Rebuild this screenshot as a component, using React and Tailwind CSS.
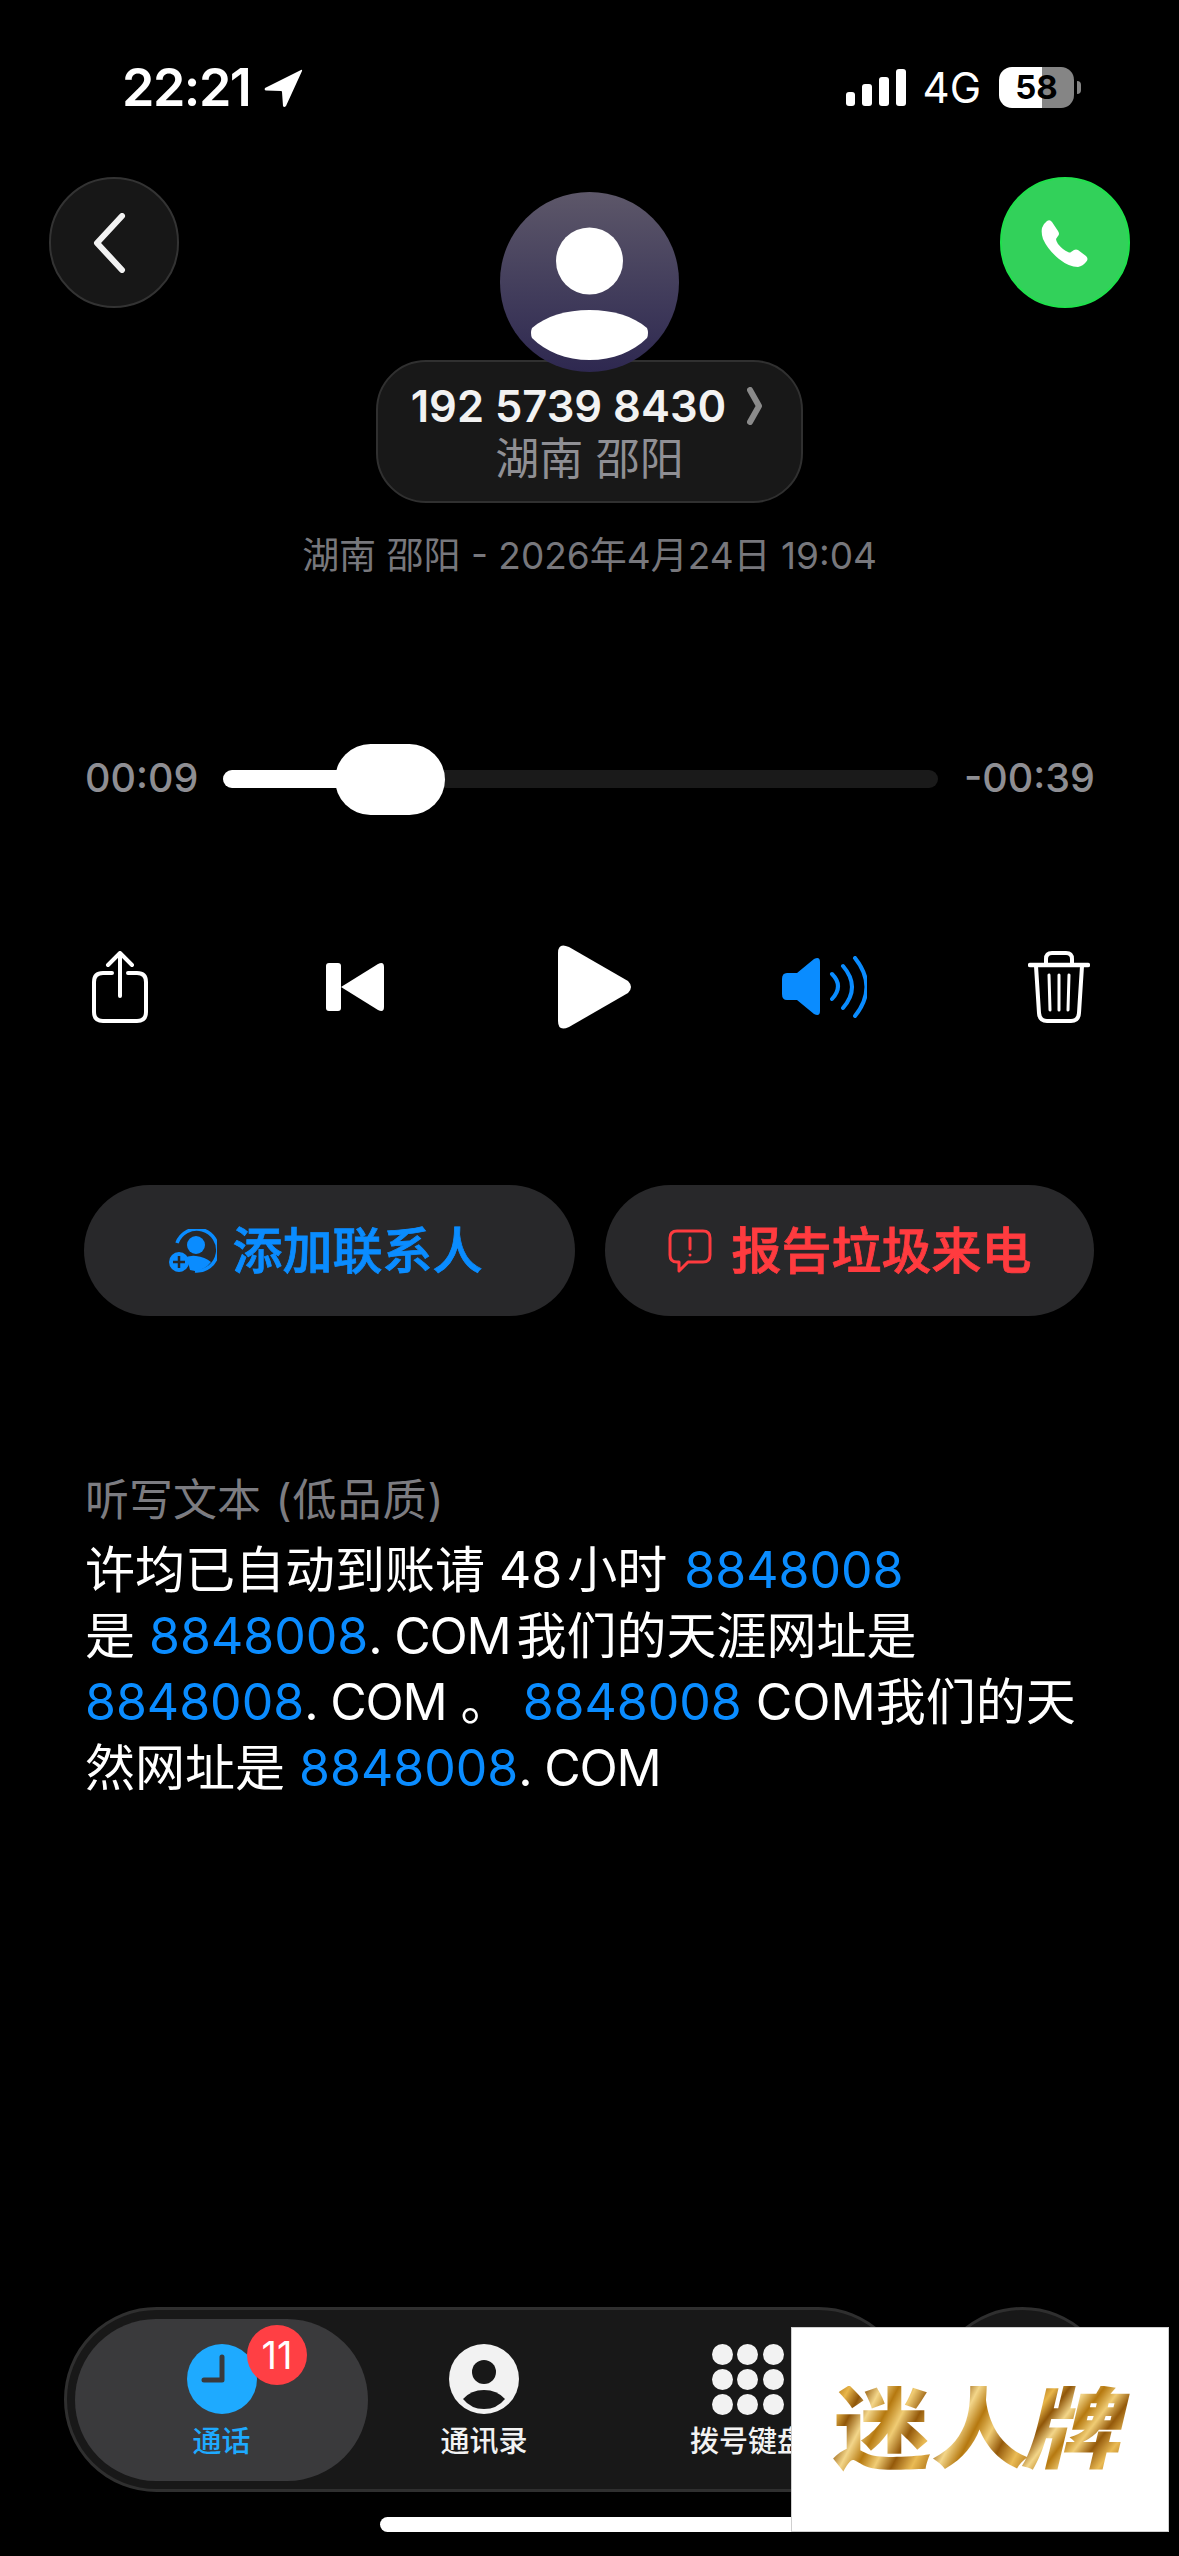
const BLUE = '#0a8cff';

function StatusBar() {
  return (
    <div className="flex h-[41px] mt-[67px] items-center justify-between pl-[122px] pr-[98px]">
      <div className="flex items-center gap-[14px]">
        <span className="text-[52px] leading-[41px] font-semibold text-white tracking-[-1.500px]">22:21</span>
        <svg width="40" height="40" viewBox="0 0 40 40">
          <path d="M37 2 L1 20 Q0 22 2 22.5 L17 23 Q18 23 18 24 L19 38 Q20 40 22 38 L38 3 Q38.5 1 37 2 Z" fill="#fff" />
        </svg>
      </div>
      <div className="flex items-center">
        <div className="flex items-end gap-[7px] h-[37px]">
          <div className="w-[9px] h-[14px] rounded-[3px] bg-white" />
          <div className="w-[10px] h-[22px] rounded-[3px] bg-white" />
          <div className="w-[10px] h-[29px] rounded-[3px] bg-white" />
          <div className="w-[10px] h-[37px] rounded-[3px] bg-white" />
        </div>
        <span className="ml-[17px] text-[42px] leading-[41px] text-white font-normal">4G</span>
        <div className="relative ml-[18px] w-[75px] h-[41px] rounded-[13px] bg-[linear-gradient(90deg,#fff_0,#fff_57%,#858585_57%,#858585_100%)] flex items-center justify-center">
          <span className="text-[33px] leading-none font-bold text-black">58</span>
        </div>
        <div className="ml-[3px] w-[4px] h-[13px] rounded-r-full bg-[#858585]" />
      </div>
    </div>
  );
}

function Avatar() {
  return (
    <div className="relative z-10 w-[179px] h-[180px] rounded-full bg-linear-to-b from-[#5d5769] to-[#2e2850]">
      <svg width="179" height="180" viewBox="0 0 179 180">
        <circle cx="89.5" cy="69" r="33.5" fill="#fff" />
        <path d="M32 136 Q30 141 32 146 C46 160 66 168 89.5 168 C113 168 133 160 147 146 Q149 141 147 136 C133 124 113 118 89.5 118 C66 118 46 124 32 136 Z" fill="#fff" />
      </svg>
    </div>
  );
}

function Header() {
  return (
    <div className="flex items-start justify-between mt-[69px] px-[49px]">
      <div className="w-[130px] h-[131px] rounded-full bg-[#171717] border-2 border-[#333] flex items-center justify-center">
        <svg className="mr-[6px]" width="40" height="60" viewBox="0 0 40 60" fill="none">
          <path d="M31 3 L6 30 L31 57" stroke="#f2f2f2" strokeWidth="6" strokeLinecap="round" strokeLinejoin="round" />
        </svg>
      </div>
      <div className="flex flex-col items-center pt-[15px]">
        <Avatar />
        <div className="-mt-[12px] w-[427px] h-[143px] rounded-[50px] bg-[#181818] border-2 border-[#303030] flex flex-col items-center pt-[21px]">
          <div className="flex items-center h-[46px] pr-[5px]">
            <span className="text-[43.500px] leading-[46px] font-semibold text-[#f2f2f2]">192 5739 8430</span>
            <svg className="ml-[21px]" width="16" height="38" viewBox="0 0 16 38" fill="none">
              <path d="M3 3 L12 19 L3 35" stroke="#8a8a8a" strokeWidth="6" strokeLinecap="round" strokeLinejoin="round" />
            </svg>
          </div>
          <span className="mt-[5px] text-[44px] leading-[50px] text-[#8f8f94]">湖南 邵阳</span>
        </div>
        <span className="mt-[33px] h-[40px] text-[37px] leading-[40px] text-[#77777c] whitespace-nowrap">湖南 邵阳 - 2026年4月24日 19:04</span>
      </div>
      <div className="w-[130px] h-[131px] rounded-full bg-[#32d15a] border-2 border-[#1fe04c] flex items-center justify-center">
        <svg width="48" height="48" viewBox="0 0 48 48" fill="#fff">
          <path d="M6 2 Q9 0 11 3 L17 12 Q19 15 17 17 L15 20 Q15 22 17 25 Q22 31 27 33 Q29 34 30 33 L33 31 Q35 30 37 31 L45 37 Q48 40 45 43 Q42 47 37 48 Q28 48 18 40 Q7 31 2 20 Q0 14 1 9 Q2 5 6 2 Z" />
        </svg>
      </div>
    </div>
  );
}

function Slider() {
  return (
    <div className="flex items-center h-[71px] mt-[167px] pl-[85px]">
      <span className="w-[138px] text-[39.500px] leading-none font-medium text-[#8e8e93]">00:09</span>
      <div className="relative w-[715px] h-[18px] rounded-full bg-[#1a1a1a]">
        <div className="w-[150px] h-[18px] rounded-full bg-white" />
        <div className="absolute left-[112px] -top-[26px] w-[110px] h-[71px] rounded-[36px] bg-white" />
      </div>
      <span className="ml-[26px] text-[39.500px] leading-none font-medium text-[#8e8e93]">-00:39</span>
    </div>
  );
}

function Controls() {
  return (
    <div className="flex items-center h-[84px] mt-[131px] pl-[92px]">
      <svg width="56" height="72" viewBox="0 0 56 72" fill="none" stroke="#fff" strokeWidth="4" strokeLinecap="round" strokeLinejoin="round">
        <path d="M20 22 H11 Q2 22 2 31 V61 Q2 70 11 70 H45 Q54 70 54 61 V31 Q54 22 45 22 H36" />
        <path d="M28 45 V3 M16 14 L28 2 L40 14" />
      </svg>
      <svg className="ml-[178px]" width="58" height="50" viewBox="0 0 58 50" fill="#fff">
        <rect x="0" y="1" width="15" height="48" rx="3" />
        <path d="M15 25 L52 2 Q58 -1 58 5 V45 Q58 51 52 48 Z" />
      </svg>
      <svg className="ml-[174px]" width="74" height="84" viewBox="0 0 74 84" fill="#fff">
        <path d="M0 8 Q0 -3 11 2 L70 36 Q76 42 70 48 L11 82 Q0 87 0 76 Z" />
      </svg>
      <svg className="ml-[150px]" width="85" height="62" viewBox="0 0 85 62" fill="none">
        <path d="M5 17 H15 L32 3 Q38 0 38 6 V55 Q38 61 32 58 L15 44 H5 Q0 44 0 38 V23 Q0 17 5 17 Z" fill={BLUE} />
        <path d="M50 18 Q62 30 50 43 M61 10 Q79 31 61 52 M73 2 Q96 31 73 60" stroke={BLUE} strokeWidth="4" strokeLinecap="round" />
      </svg>
      <svg className="ml-[161px]" width="62" height="72" viewBox="0 0 62 72" fill="none" stroke="#fff" strokeLinecap="round">
        <path d="M2 14 H60" strokeWidth="4.500" />
        <path d="M18 13 V8 Q18 2 24 2 H38 Q44 2 44 8 V13" strokeWidth="4" />
        <path d="M8 15 L11 62 Q11.500 70 19 70 H43 Q50.500 70 51 62 L54 15" strokeWidth="4" />
        <path d="M21 24 L22 59 M31 24 V59 M41 24 L40 59" strokeWidth="3" />
      </svg>
    </div>
  );
}

function Actions() {
  return (
    <div className="flex gap-[30px] mt-[156px] pl-[84px]">
      <div className="w-[491px] h-[131px] rounded-full bg-[#28282a] flex items-center justify-center gap-[16px] pr-[8px]">
        <svg width="48" height="44" viewBox="0 0 48 44" fill="none">
          <path d="M8 14 A21 21 0 1 1 26 42" stroke={BLUE} strokeWidth="3.500" />
          <circle cx="27" cy="16" r="9" fill={BLUE} />
          <path d="M21 41 Q20 33 14 30 Q20 26 27 27 Q36 28 42 33 Q36 41 26 42 Z" fill={BLUE} />
          <circle cx="10" cy="33" r="10" fill={BLUE} />
          <path d="M10 27 V39 M4 33 H16" stroke="#28282a" strokeWidth="2.500" />
        </svg>
        <span className="text-[50px] leading-none font-medium text-[#0a8cff] [-webkit-text-stroke:0.8px_#0a8cff]">添加联系人</span>
      </div>
      <div className="w-[489px] h-[131px] rounded-full bg-[#28282a] flex items-center justify-center gap-[20px]">
        <svg width="44" height="44" viewBox="0 0 44 44" fill="none" stroke="#ff3b3f" strokeWidth="3" strokeLinejoin="round">
          <path d="M9 2 H35 Q42 2 42 9 V26 Q42 33 35 33 H20 L11 42 V33 H9 Q2 33 2 26 V9 Q2 2 9 2 Z" />
          <path d="M22 9 V20" strokeLinecap="round" />
          <circle cx="22" cy="26" r="1.500" fill="#ff3b3f" stroke="none" />
        </svg>
        <span className="text-[50px] leading-none font-medium text-[#ff3b3f] [-webkit-text-stroke:0.8px_#ff3b3f]">报告垃圾来电</span>
      </div>
    </div>
  );
}

function Num({ children }) {
  return <span className="text-[#0a8cff]">{children}</span>;
}

function Com() {
  return <span className="tracking-[-1.200px]">. COM</span>;
}

function Transcript() {
  return (
    <div className="mt-[159px] pl-[85px]">
      <div className="h-[50px] text-[44px] leading-[50px] text-[#7c7c81]">听写文本 <span className="ml-[2px] tracking-[1px]">(低品质)</span></div>
      <p className="mt-[12px] text-[50px] leading-[66px] text-white whitespace-nowrap">
        许均已自动到账请 48<span className="ml-[5px]">小时</span> <span className="ml-[3px]"><Num>8848008</Num></span><br />
        是 <Num>8848008</Num><Com /><span className="ml-[6px]">我们的天涯网址是</span><br />
        <Num>8848008</Num><Com /> 。 <span className="-ml-[2px]"><Num>8848008</Num></span> COM我们的天<br />
        然网址是 <Num>8848008</Num><Com />
      </p>
    </div>
  );
}

function TabBar() {
  const dots = [0, 1, 2, 3, 4, 5, 6, 7, 8];
  return (
    <div className="flex items-start mt-auto pl-[64px]">
      <div className="flex w-[847px] h-[185px] rounded-full bg-[#181818] border-[3px] border-[#2f2f2f] pl-[8px] pt-[9px]">
        <div className="relative w-[293px] h-[162px] rounded-full bg-[#3a3a3c] flex flex-col items-center pt-[25px]">
          <svg width="70" height="70" viewBox="0 0 70 70">
            <circle cx="35" cy="35" r="35" fill="#1eaaff" />
            <path d="M35 13 V36 H17" fill="none" stroke="#3a3a3c" strokeWidth="5" strokeLinecap="round" strokeLinejoin="round" />
          </svg>
          <span className="mt-[8px] text-[29px] leading-[40px] font-medium text-[#1eaaff]">通话</span>
          <div className="absolute left-[172px] top-[6px] w-[60px] h-[60px] rounded-full bg-[#ff3f44] flex items-center justify-center text-[38px] leading-none text-white">11</div>
        </div>
        <div className="w-[200px] flex flex-col items-center pt-[25px] ml-[16px]">
          <svg width="70" height="70" viewBox="0 0 70 70">
            <defs>
              <mask id="contactCut">
                <rect width="70" height="70" fill="#fff" />
                <circle cx="35" cy="28" r="12" fill="#000" />
                <path d="M14 55 Q22 46 35 46 Q48 46 56 55 Q48 65 35 65 Q22 65 14 55 Z" fill="#000" />
              </mask>
            </defs>
            <circle cx="35" cy="35" r="35" fill="#f2f2f2" mask="url(#contactCut)" />
          </svg>
          <span className="mt-[8px] text-[29px] leading-[40px] font-medium text-[#f2f2f2]">通讯录</span>
        </div>
        <div className="w-[200px] flex flex-col items-center pt-[25px] ml-[64px]">
          <div className="grid grid-cols-3 gap-[4px] w-[72px] h-[70px]">
            {dots.map((d) => (
              <div key={d} className="w-[21px] h-[21px] rounded-full bg-[#f2f2f2]" />
            ))}
          </div>
          <span className="mt-[8px] text-[29px] leading-[40px] font-medium text-[#f2f2f2] whitespace-nowrap">拨号键盘</span>
        </div>
      </div>
      <div className="ml-[19px] w-[185px] h-[185px] rounded-full bg-[#181818] border-[3px] border-[#2f2f2f]" />
    </div>
  );
}

function Watermark() {
  const gold = 'text-[98px] leading-none font-black text-transparent bg-clip-text bg-[linear-gradient(115deg,#a8690c_0%,#e8b64a_12%,#8f5508_22%,#f3d68a_34%,#b5780f_46%,#f0cc74_58%,#94590a_70%,#eabb55_84%,#a5660c_100%)]';
  return (
    <div className="absolute left-[791px] top-[2327px] w-[378px] h-[205px] bg-white border border-[#cfcfcf] flex items-center justify-center">
      <div className="flex items-center scale-y-90">
        <span className={gold}>迷</span>
        <span className={gold}>人</span>
        <span className={`${gold} -skew-x-12`}>牌</span>
      </div>
    </div>
  );
}

export default function App() {
  return (
    <div
      className="relative flex flex-col w-[1179px] h-[2556px] overflow-hidden bg-black"
      style={{ fontFamily: 'Inter, "Noto Sans CJK SC", sans-serif' }}
    >
      <StatusBar />
      <Header />
      <Slider />
      <Controls />
      <Actions />
      <Transcript />
      <TabBar />
      <div className="mt-[25px] mb-[24px] ml-[380px] w-[420px] h-[15px] rounded-full bg-white" />
      <Watermark />
    </div>
  );
}
